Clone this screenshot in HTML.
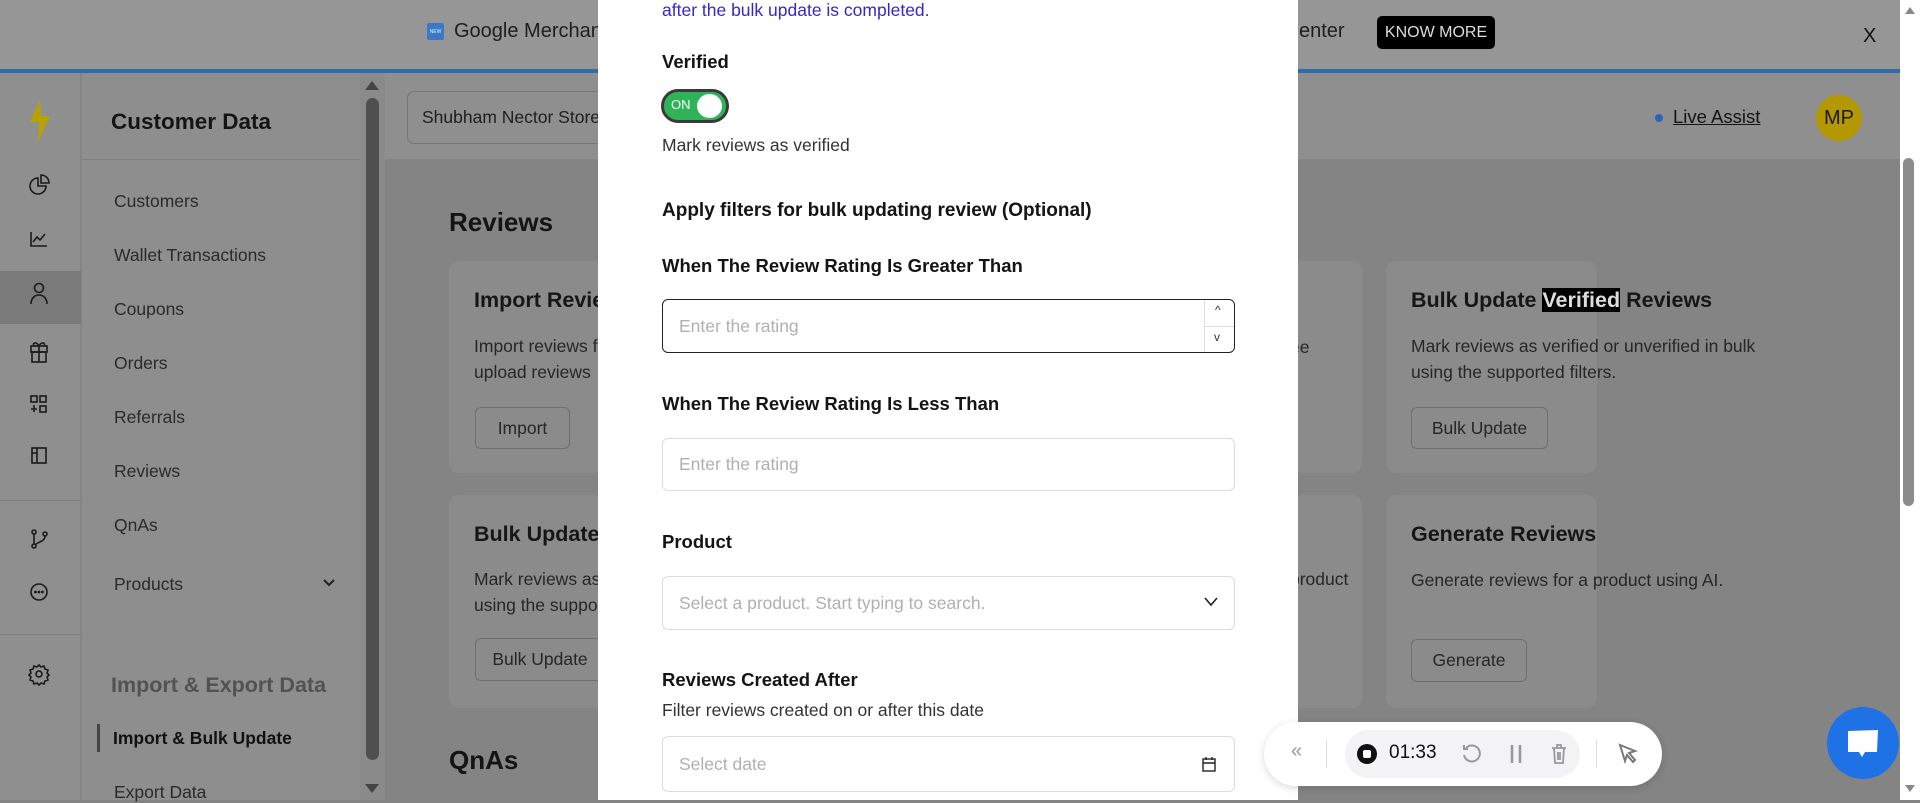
<!DOCTYPE html>
<html><head><meta charset="utf-8"><style>
*{margin:0;padding:0;box-sizing:border-box}
body{width:1920px;height:800px;overflow:hidden;position:relative;font-family:"Liberation Sans",sans-serif;background:#848484;color:#1c1c1c}
.a{position:absolute}
.t{position:absolute;white-space:nowrap}
.side{font-size:17.5px;color:#2a2a2a}
.card{position:absolute;background:#8b8b8b;border-radius:10px}
.h{font-weight:bold;font-size:21.5px;color:#161616}
.d{font-size:17.5px;color:#262626;line-height:26px}
.btn{position:absolute;border:1px solid #6f6f6f;border-radius:6px;font-size:17.5px;color:#262626;display:flex;align-items:center;justify-content:center}
.lbl{position:absolute;font-weight:bold;font-size:18.5px;color:#141414;white-space:nowrap}
.inp{position:absolute;left:662px;width:573px;border:1px solid #dcdcdc;border-radius:6px;font-size:17.5px;color:#b0b0b0;padding-left:16px;display:flex;align-items:center}
</style></head><body>
<!-- top bar -->
<div class="a" style="left:0;top:0;width:1900px;height:70px;background:#969696"></div>
<div class="a" style="left:0;top:69px;width:1900px;height:4px;background:#2f6cae"></div>
<div class="a" style="left:427px;top:23px;width:17px;height:17px;background:#3d78c4;border-radius:2px;font-size:5px;color:#cfe;display:flex;align-items:center;justify-content:center">NEW</div>
<div class="t" style="left:454px;top:20px;font-size:20px;color:#1e1e1e">Google Merchant Center</div>
<div class="t" style="left:1299px;top:20px;font-size:20px;color:#1e1e1e">enter</div>
<div class="a" style="left:1377px;top:16px;width:118px;height:33px;background:#000;border-radius:5px;color:#ddd;font-size:16px;display:flex;align-items:center;justify-content:center">KNOW MORE</div>
<div class="t" style="left:1863px;top:25px;font-size:20px;color:#111">X</div>
<!-- icon rail -->
<div class="a" style="left:0;top:73px;width:81px;height:727px;background:#8f8f8f;border-right:1px solid #858585"></div>
<svg class="a" style="left:28px;top:100px" width="24" height="42" viewBox="0 0 24 42"><path d="M12 0 L2 22 L11 22 L10 42 L22 16 L13 16 Z" fill="#b8a200"/></svg>
<div class="a" style="left:0;top:271px;width:81px;height:53px;background:#7a7a7a"></div>
<svg class="a" style="left:26px;top:170px" width="26" height="520" viewBox="0 0 26 520" fill="none" stroke="#1a1a1a" stroke-width="1.6">
<path d="M12 8a8 8 0 1 0 8 8h-8z"/><path d="M15 5v8h8a8 8 0 0 0-8-8z"/>
<path d="M5 62v14h16M7 72l4-5 3 3 5-6"/>
<circle cx="13" cy="118" r="4.5"/><path d="M5 134c0-6 4-9 8-9s8 3 8 9"/>
<rect x="5" y="176" width="16" height="6"/><rect x="6" y="182" width="14" height="10"/><path d="M13 176v16M13 176c-3-5-7-3-5 0M13 176c3-5 7-3 5 0"/>
<rect x="5" y="226" width="6" height="6"/><rect x="14" y="226" width="6" height="6"/><rect x="14" y="236" width="6" height="6"/><path d="M8 235v7M5 239h6"/>
<rect x="6" y="278" width="14" height="15"/><path d="M11 278v15M6 283h5"/>
<circle cx="8" cy="362" r="2"/><circle cx="8" cy="376" r="2"/><circle cx="19" cy="364" r="2"/><path d="M8 364v10M19 366c0 6-8 6-10 9"/>
<circle cx="13" cy="422" r="8"/><circle cx="9.5" cy="422" r=".6" fill="#1a1a1a"/><circle cx="13" cy="422" r=".6" fill="#1a1a1a"/><circle cx="16.5" cy="422" r=".6" fill="#1a1a1a"/>
<circle cx="13" cy="504" r="3"/><path d="M13 495l2 2 3-1 1 3 3 1-1 3 2 2-2 2 1 3-3 1-1 3-3-1-2 2-2-2-3 1-1-3-3-1 1-3-2-2 2-2-1-3 3-1 1-3 3 1z"/>
</svg>
<div class="a" style="left:0;top:500px;width:81px;height:1px;background:#7d7d7d"></div>
<div class="a" style="left:0;top:634px;width:81px;height:1px;background:#7d7d7d"></div>
<!-- sidebar -->
<div class="a" style="left:82px;top:73px;width:283px;height:727px;background:#8e8e8e"></div>
<div class="a" style="left:82px;top:159px;width:283px;height:1px;background:#7e7e7e"></div>
<div class="t" style="left:111px;top:109px;font-size:22.5px;font-weight:bold;color:#141414">Customer Data</div>
<div class="t side" style="left:114px;top:191px">Customers</div>
<div class="t side" style="left:114px;top:245px">Wallet Transactions</div>
<div class="t side" style="left:114px;top:299px">Coupons</div>
<div class="t side" style="left:114px;top:353px">Orders</div>
<div class="t side" style="left:114px;top:407px">Referrals</div>
<div class="t side" style="left:114px;top:461px">Reviews</div>
<div class="t side" style="left:114px;top:515px">QnAs</div>
<div class="t side" style="left:114px;top:574px">Products</div>
<svg class="a" style="left:322px;top:578px" width="14" height="10"><path d="M2 2l5 5 5-5" stroke="#222" stroke-width="2" fill="none"/></svg>
<div class="t" style="left:111px;top:673px;font-size:21.5px;font-weight:bold;color:#525252">Import &amp; Export Data</div>
<div class="a" style="left:97px;top:724px;width:3px;height:28px;background:#444"></div>
<div class="t" style="left:113px;top:728px;font-size:17.5px;font-weight:bold;color:#111">Import &amp; Bulk Update</div>
<div class="t side" style="left:114px;top:782px">Export Data</div>
<!-- sidebar scrollbar -->
<div class="a" style="left:360px;top:73px;width:25px;height:727px;background:#8a8a8a"></div>
<svg class="a" style="left:364px;top:80px" width="16" height="12"><path d="M8 1l7 9H1z" fill="#444"/></svg>
<div class="a" style="left:366px;top:98px;width:13px;height:662px;background:#4f4f4f;border-radius:7px"></div>
<svg class="a" style="left:364px;top:782px" width="16" height="12"><path d="M8 11l7-9H1z" fill="#444"/></svg>
<!-- header content -->
<div class="a" style="left:385px;top:73px;width:1515px;height:86px;background:#8f8f8f"></div>
<div class="a" style="left:407px;top:91px;width:210px;height:53px;border:1px solid #767676;border-right:none;border-radius:7px 0 0 7px;background:#8f8f8f"></div>
<div class="t" style="left:422px;top:107px;font-size:17.5px;color:#1e1e1e">Shubham Nector Store</div>
<div class="a" style="left:1655px;top:114px;width:8px;height:8px;background:#2b63b8;border-radius:50%"></div>
<div class="t" style="left:1673px;top:106px;font-size:18.5px;color:#141414;text-decoration:underline">Live Assist</div>
<div class="a" style="left:1816px;top:95px;width:46px;height:46px;background:#b49800;border-radius:50%;font-size:20px;color:#1a1a1a;display:flex;align-items:center;justify-content:center">MP</div>
<!-- content -->
<div class="t" style="left:449px;top:207px;font-size:26px;font-weight:bold;color:#141414">Reviews</div>
<div class="card" style="left:449px;top:261px;width:200px;height:212px"></div>
<div class="card" style="left:449px;top:495px;width:200px;height:213px"></div>
<div class="card" style="left:1290px;top:261px;width:72px;height:212px"></div>
<div class="card" style="left:1290px;top:495px;width:72px;height:213px"></div>
<div class="card" style="left:1386px;top:261px;width:211px;height:212px"></div>
<div class="card" style="left:1386px;top:495px;width:211px;height:213px"></div>
<div class="t h" style="left:474px;top:288px">Import Reviews</div>
<div class="t d" style="left:474px;top:333px">Import reviews from<br>upload reviews</div>
<div class="btn" style="left:475px;top:407px;width:95px;height:42px">Import</div>
<div class="t h" style="left:474px;top:522px">Bulk Update</div>
<div class="t d" style="left:474px;top:566px">Mark reviews as<br>using the supported</div>
<div class="btn" style="left:475px;top:638px;width:130px;height:43px">Bulk Update</div>
<div class="t d" style="left:1290px;top:334px">ee</div>
<div class="t d" style="left:1290px;top:566px">product</div>
<div class="t h" style="left:1411px;top:288px">Bulk Update <span style="background:#000;color:#ddd">Verified</span> Reviews</div>
<div class="t d" style="left:1411px;top:333px">Mark reviews as verified or unverified in bulk<br>using the supported filters.</div>
<div class="btn" style="left:1411px;top:407px;width:137px;height:42px">Bulk Update</div>
<div class="t h" style="left:1411px;top:522px">Generate Reviews</div>
<div class="t d" style="left:1411px;top:567px">Generate reviews for a product using AI.</div>
<div class="btn" style="left:1411px;top:639px;width:116px;height:43px">Generate</div>
<div class="t" style="left:449px;top:745px;font-size:26px;font-weight:bold;color:#141414">QnAs</div>
<!-- right scrollbar -->
<div class="a" style="left:1900px;top:0;width:20px;height:800px;background:#fff"></div>
<svg class="a" style="left:1904px;top:6px" width="12" height="10"><path d="M6 1l5 7H1z" fill="#888"/></svg>
<div class="a" style="left:1903px;top:158px;width:11px;height:348px;background:#8c8c8c;border-radius:6px"></div>
<svg class="a" style="left:1904px;top:783px" width="12" height="10"><path d="M6 9l5-7H1z" fill="#888"/></svg>
<!-- modal -->
<div class="a" style="left:598px;top:0;width:700px;height:800px;background:#fff"></div>
<div class="t" style="left:662px;top:0;font-size:17.5px;color:#3428c8">after the bulk update is completed.</div>
<div class="lbl" style="left:662px;top:51px">Verified</div>
<div class="a" style="left:661px;top:89px;width:68px;height:34px;background:#2eb356;border:3px solid #3a3a3a;border-radius:17px"></div>
<div class="t" style="left:671px;top:97px;font-size:13px;color:#fff">ON</div>
<div class="a" style="left:697px;top:94px;width:25px;height:24px;background:#fff;border-radius:50%"></div>
<div class="t" style="left:662px;top:135px;font-size:17.5px;color:#333">Mark reviews as verified</div>
<div class="lbl" style="left:662px;top:200px;font-size:19px">Apply filters for bulk updating review (Optional)</div>
<div class="lbl" style="left:662px;top:255px">When The Review Rating Is Greater Than</div>
<div class="inp" style="top:299px;height:54px;border-color:#222">Enter the rating</div>
<div class="a" style="left:1204px;top:300px;width:1px;height:52px;background:#ddd"></div>
<div class="a" style="left:1205px;top:326px;width:29px;height:1px;background:#ddd"></div>
<div class="t" style="left:1215px;top:303px;font-size:12px;color:#333">^</div>
<div class="t" style="left:1214px;top:330px;font-size:12px;color:#333">v</div>
<div class="lbl" style="left:662px;top:393px">When The Review Rating Is Less Than</div>
<div class="inp" style="top:438px;height:53px">Enter the rating</div>
<div class="lbl" style="left:662px;top:531px">Product</div>
<div class="inp" style="top:576px;height:54px">Select a product. Start typing to search.</div>
<svg class="a" style="left:1203px;top:596px" width="16" height="12"><path d="M2 2l6 7 6-7" stroke="#222" stroke-width="1.6" fill="none"/></svg>
<div class="lbl" style="left:662px;top:669px">Reviews Created After</div>
<div class="t" style="left:662px;top:700px;font-size:17.5px;color:#333">Filter reviews created on or after this date</div>
<div class="inp" style="top:736px;height:56px">Select date</div>
<svg class="a" style="left:1202px;top:756px" width="14" height="16" fill="none" stroke="#222" stroke-width="1.4"><rect x="1" y="3" width="12" height="12"/><path d="M1 7h12M4 1v3M10 1v3"/></svg>
<!-- recorder -->
<div class="a" style="left:1264px;top:722px;width:398px;height:64px;background:#fff;border-radius:32px;box-shadow:0 2px 8px rgba(0,0,0,.15)"></div>
<div class="t" style="left:1291px;top:740px;font-size:20px;color:#999">«</div>
<div class="a" style="left:1326px;top:740px;width:1px;height:28px;background:#ddd"></div>
<div class="a" style="left:1345px;top:730px;width:235px;height:48px;background:#f3f3f5;border-radius:24px"></div>
<div class="a" style="left:1357px;top:744px;width:20px;height:20px;background:#111;border-radius:50%"></div>
<div class="a" style="left:1363px;top:750px;width:8px;height:8px;background:#fff;border-radius:2px"></div>
<div class="t" style="left:1389px;top:742px;font-size:19px;color:#111">01:33</div>
<svg class="a" style="left:1460px;top:742px" width="112" height="24" fill="none" stroke="#999" stroke-width="2"><path d="M6 6a8 8 0 1 1-2 7M4 3v4h4"/><path d="M52 3v18M60 3v18" stroke-width="2.6"/><path d="M92 6h14M97 6V3h4v3M94 6l1 15h8l1-15M98 10v8M100 10v8" stroke-width="1.8"/></svg>
<div class="a" style="left:1596px;top:740px;width:1px;height:28px;background:#ddd"></div>
<svg class="a" style="left:1617px;top:742px" width="22" height="22"><path d="M3 3l15 6-6 2 6 7-2 2-6-7-2 6z" fill="none" stroke="#777" stroke-width="2"/></svg>
<!-- chat -->
<div class="a" style="left:1827px;top:707px;width:72px;height:72px;background:#1f72e6;border-radius:50%"></div>
<svg class="a" style="left:1846px;top:729px" width="34" height="30"><path d="M2 2l30-1 -1 22-12 0-3 5-3-5-11 0z" fill="#fff"/></svg>
</body></html>
